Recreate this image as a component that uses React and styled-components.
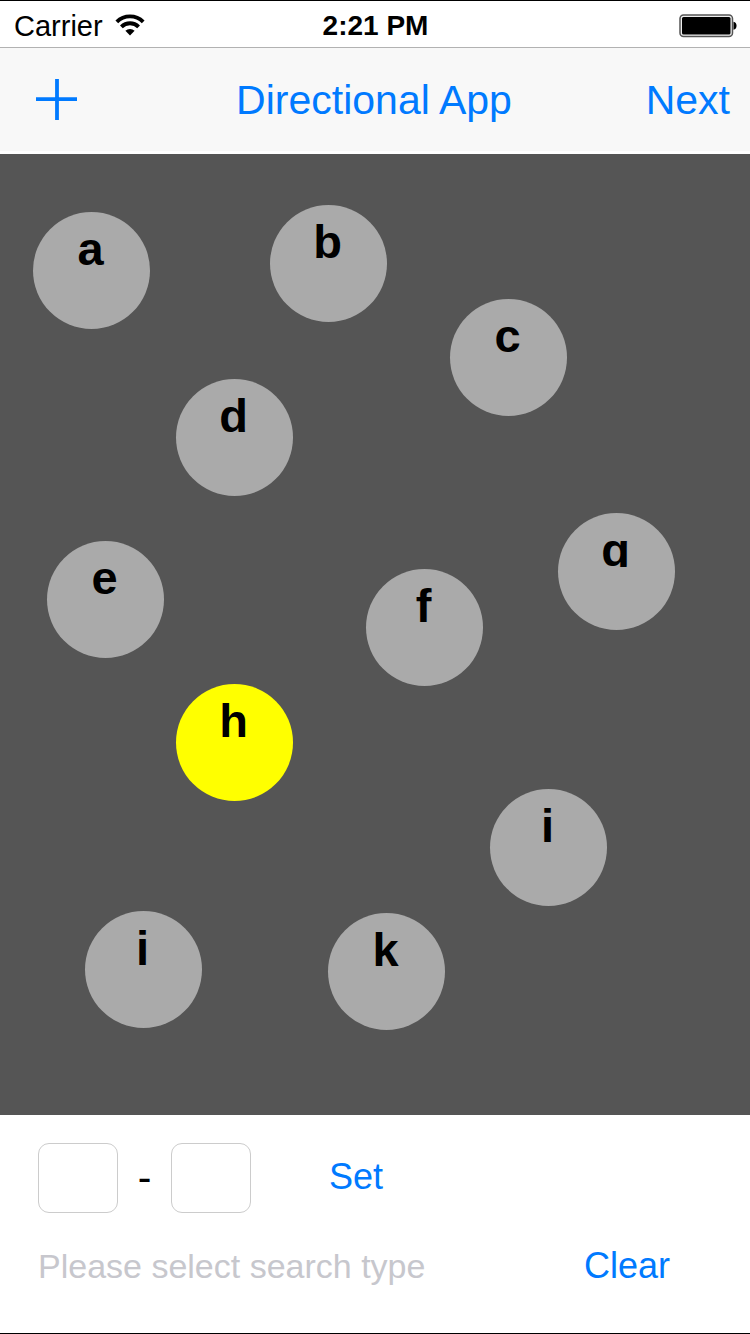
import React, { useState } from "react";
import styled, { createGlobalStyle } from "styled-components";

const GlobalStyle = createGlobalStyle`
  * { box-sizing: border-box; }
  body {
    margin: 0;
    background: #fff;
    color: #000;
    font-family: "Liberation Sans", Arial, sans-serif;
  }
`;

const Screen = styled.div`
  display: flex;
  flex-direction: column;
  min-height: 100vh;
  border-top: 1px solid #000;
  border-bottom: 1px solid #000;
`;

const StatusBar = styled.header`
  display: grid;
  grid-template-columns: 1fr auto 1fr;
  align-items: center;
  height: 47px;
  padding: 3px 13px 0 14px;
  border-bottom: 1px solid #b2b2b2;
`;

const Carrier = styled.span`
  display: flex;
  align-items: center;
  gap: 12px;
  font-size: 29px;
  line-height: 32px;
`;

const Clock = styled.time`
  font-size: 28px;
  font-weight: 700;
  line-height: 32px;
`;

const Battery = styled.svg`
  justify-self: end;
`;

const NavBar = styled.nav`
  display: grid;
  grid-template-columns: 1fr auto 1fr;
  align-items: center;
  height: 106px;
  padding: 0 20px 0 36px;
  background: #f8f8f8;
  border-bottom: 3px solid #fff;
`;

const NavCell = styled.div`
  display: flex;
  justify-content: ${({ $end }) => ($end ? "flex-end" : "flex-start")};
`;

const TextButton = styled.button`
  padding: 0;
  border: 0;
  background: none;
  color: #007aff;
  font-family: inherit;
  font-size: ${({ $large }) => ($large ? 41 : 36)}px;
  line-height: 68px;
  cursor: pointer;
`;

const IconButton = styled.button`
  display: flex;
  padding: 0;
  border: 0;
  background: none;
  color: #007aff;
  cursor: pointer;
`;

const Title = styled.h1`
  margin: 0 18px 0 0;
  color: #007aff;
  font-size: 41px;
  font-weight: 400;
  line-height: 68px;
`;

const Canvas = styled.main`
  position: relative;
  flex: 1;
  min-height: 900px;
  background: #555;
`;

const Node = styled.button`
  position: absolute;
  left: ${({ $x }) => $x}px;
  top: ${({ $y }) => $y}px;
  display: flex;
  align-items: flex-start;
  width: 117px;
  height: 117px;
  padding: 10px 2px 0 0;
  border: 0;
  border-radius: 50%;
  background: ${({ $active }) => ($active ? "#ff0" : "#aaa")};
  color: #000;
  font-family: inherit;
  cursor: pointer;
`;

const NodeLabel = styled.span`
  flex: 1;
  height: ${({ $short }) => ($short ? 44 : 54)}px;
  overflow: ${({ $short }) => ($short ? "hidden" : "visible")};
  font-size: 47px;
  font-weight: 700;
  line-height: 54px;
  text-align: center;
`;

const Panel = styled.form`
  display: flex;
  flex-direction: column;
  gap: 18px;
  padding: 28px 80px 32px 38px;
`;

const Row = styled.div`
  display: flex;
  align-items: flex-start;
  height: 70px;
`;

const RangeInput = styled.input`
  width: 80px;
  height: 70px;
  padding: 0 12px;
  border: 1px solid #ccc;
  border-radius: 11px;
  background: #fff;
  font-family: inherit;
  font-size: 28px;
`;

const Dash = styled.span`
  width: 53px;
  font-size: 41px;
  line-height: 68px;
  text-align: center;
`;

const SetSlot = styled.div`
  margin-left: 78px;
`;

const SearchRow = styled(Row)`
  align-items: center;
  justify-content: space-between;
`;

const SearchInput = styled.input`
  flex: 1;
  min-width: 0;
  height: 68px;
  padding: 0;
  border: 0;
  outline: 0;
  background: none;
  font-family: inherit;
  font-size: 34px;

  &::placeholder {
    color: #c7c7cd;
    opacity: 1;
  }
`;

const nodes = [
  { id: "a", x: 33, y: 58 },
  { id: "b", x: 270, y: 51 },
  { id: "c", x: 450, y: 145 },
  { id: "d", x: 176, y: 225 },
  { id: "e", x: 47, y: 387 },
  { id: "f", x: 366, y: 415 },
  { id: "g", x: 558, y: 359 },
  { id: "h", x: 176, y: 530 },
  { id: "i", x: 490, y: 635 },
  { id: "j", x: 85, y: 757 },
  { id: "k", x: 328, y: 759 },
];

// Letters with a descender are cut at the baseline by their label.
const hasDescender = (letter) => "gjpqy".includes(letter);

export default function App() {
  const [active, setActive] = useState("h");

  return (
    <>
      <GlobalStyle />
      <Screen>
        <StatusBar>
          <Carrier>
            Carrier
            <svg width="30" height="24" viewBox="0 0 30 24" aria-hidden="true">
              <g fill="none" stroke="#000" strokeWidth="3.9">
                <path d="M1.800 7.800a18.800 18.800 0 0 1 26.400 0" />
                <path d="M6.400 12.800a12.200 12.200 0 0 1 17.200 0" />
              </g>
              <path d="M10.400 16.800a6.800 6.800 0 0 1 9.200 0L15 21.600z" />
            </svg>
          </Carrier>
          <Clock>2:21 PM</Clock>
          <Battery width="58" height="24" viewBox="0 0 58 24" role="img" aria-label="Battery full">
            <rect x="1" y="1" width="52.500" height="21.500" rx="3.500" fill="#eee" stroke="#555" strokeWidth="1.500" />
            <rect x="3" y="3" width="48.500" height="17.500" rx="1.500" />
            <path d="M54.500 7.800c2 .3 3 1.900 3 4s-1 3.700-3 4z" />
          </Battery>
        </StatusBar>

        <NavBar>
          <NavCell>
            <IconButton type="button" aria-label="Add">
              <svg width="41" height="41" viewBox="0 0 41 41" aria-hidden="true">
                <path d="M0 20.200h41M21 0v41" stroke="currentColor" strokeWidth="3.800" />
              </svg>
            </IconButton>
          </NavCell>
          <Title>Directional App</Title>
          <NavCell $end>
            <TextButton type="button" $large>Next</TextButton>
          </NavCell>
        </NavBar>

        <Canvas>
          {nodes.map(({ id, x, y }) => (
            <Node key={id} type="button" $x={x} $y={y} $active={id === active} onClick={() => setActive(id)}>
              <NodeLabel $short={hasDescender(id)}>{id}</NodeLabel>
            </Node>
          ))}
        </Canvas>

        <Panel onSubmit={(event) => event.preventDefault()}>
          <Row>
            <RangeInput type="text" aria-label="From node" />
            <Dash>-</Dash>
            <RangeInput type="text" aria-label="To node" />
            <SetSlot>
              <TextButton type="submit">Set</TextButton>
            </SetSlot>
          </Row>
          <SearchRow>
            <SearchInput type="text" aria-label="Search type" placeholder="Please select search type" />
            <TextButton type="reset">Clear</TextButton>
          </SearchRow>
        </Panel>
      </Screen>
    </>
  );
}
